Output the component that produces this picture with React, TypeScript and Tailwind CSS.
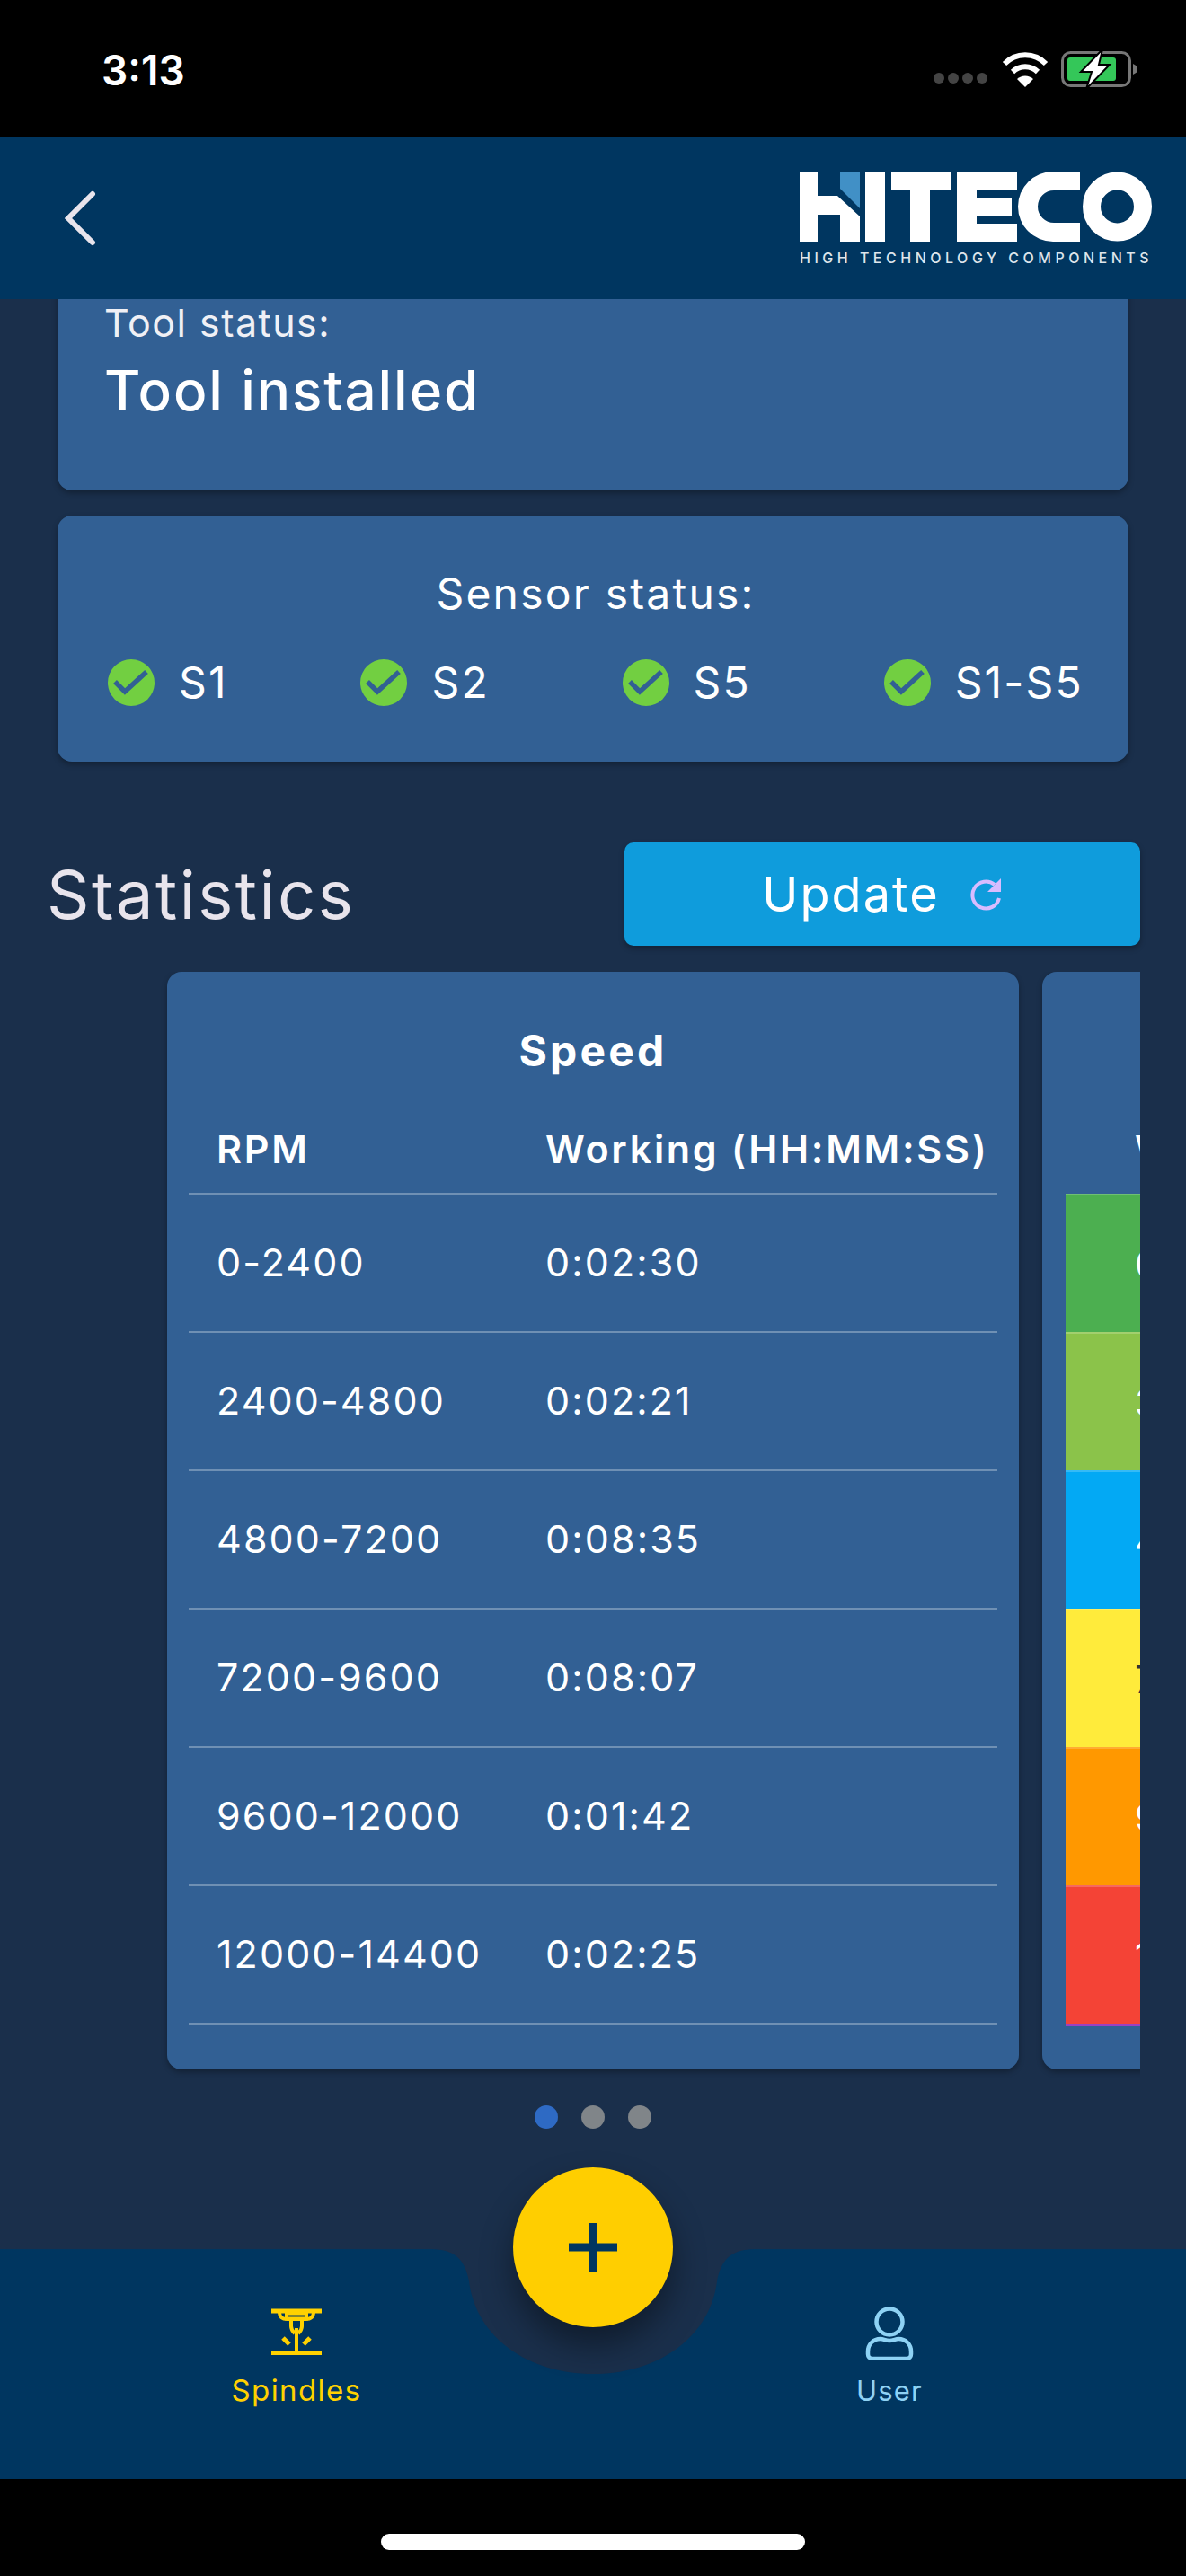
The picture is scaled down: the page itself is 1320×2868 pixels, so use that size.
const rows = [
  { range: "0-2400", time: "0:02:30", cell: "bg-[#4caf50] text-white", count: "0" },
  { range: "2400-4800", time: "0:02:21", cell: "bg-[#8bc34a] text-white", count: "3" },
  { range: "4800-7200", time: "0:08:35", cell: "bg-[#03a9f4] text-white", count: "4" },
  { range: "7200-9600", time: "0:08:07", cell: "bg-[#ffeb3b] text-[#333333]", count: "7" },
  { range: "9600-12000", time: "0:01:42", cell: "bg-[#ff9800] text-white", count: "9" },
  { range: "12000-14400", time: "0:02:25", cell: "bg-[#f44336] text-white", count: "1" },
];

function Check() {
  return (
    <svg width="52" height="52" viewBox="0 0 52 52" className="shrink-0">
      <circle cx="26" cy="26" r="26" fill="#72cf41" />
      <path d="M8 25l11 11 24-22" fill="none" stroke="#326094" strokeWidth="5.5" />
    </svg>
  );
}

function Sensor({ label }: { label: string }) {
  return (
    <div className="flex items-center gap-[27px]">
      <Check />
      <span className="text-[48px] leading-none tracking-[2.2px] text-white">{label}</span>
    </div>
  );
}

function Logo() {
  return (
    <div className="flex w-[392px] flex-col">
      <svg width="392" height="78" viewBox="0 0 392 78">
        <path d="M0 0h20v27h22l25 23v28H45V48H20v30H0z" fill="#fff" />
        <path d="M45 0h22v41L45 19z" fill="#4190c6" />
        <path d="M73 0h22v78H73z" fill="#fff" />
        <path d="M102 0h66v21h-23v57h-22V21h-21z" fill="#fff" />
        <path d="M175 0h67v21h-45v8h39v20h-39v9h45v20h-67z" fill="#fff" />
        <path d="M312 0H282a39 39 0 0 0 0 78h30V57H283a18 18 0 0 1 0-36h29z" fill="#fff" />
        <circle cx="353.5" cy="39" r="28.5" fill="none" stroke="#fff" strokeWidth="20" />
      </svg>
      <span className="mt-[9px] whitespace-nowrap font-['Inter'] text-[16px] font-medium leading-[18px] tracking-[4.5px] text-[#dfe6ec]">
        HIGH TECHNOLOGY COMPONENTS
      </span>
    </div>
  );
}

function StatusBar() {
  return (
    <div className="flex h-[153px] shrink-0 items-center justify-between bg-black pl-[113px] pr-[53px]">
      <span className="pt-[3px] font-['Inter'] text-[46px] font-semibold leading-none text-white">3:13</span>
      <div className="flex items-center">
        <div className="mt-[20px] mr-[16px] flex gap-[4px]">
          <span className="h-[12px] w-[12px] rounded-full bg-[#444]" />
          <span className="h-[12px] w-[12px] rounded-full bg-[#444]" />
          <span className="h-[12px] w-[12px] rounded-full bg-[#444]" />
          <span className="h-[12px] w-[12px] rounded-full bg-[#444]" />
        </div>
        <svg width="52" height="40" viewBox="0 0 52 40" className="mr-[14px]">
          <path d="M3 14a32 32 0 0 1 46 0" fill="none" stroke="#fff" strokeWidth="6" />
          <path d="M12 23a20 20 0 0 1 28 0" fill="none" stroke="#fff" strokeWidth="6" />
          <path d="M17 31a13 13 0 0 1 18 0l-9 9z" fill="#fff" />
        </svg>
        <svg width="86" height="44" viewBox="0 0 86 44">
          <rect x="1.5" y="3.5" width="75" height="37" rx="9" fill="none" stroke="#777" strokeWidth="3" />
          <rect x="7" y="9" width="54" height="26" rx="3" fill="#34c759" />
          <path d="M80 16l5 3v6l-5 3z" fill="#777" />
          <path d="M46 0L22 25h12l-6 19 26-27H42z" fill="#fff" stroke="#000" strokeWidth="2" />
        </svg>
      </div>
    </div>
  );
}

function Nav() {
  return (
    <div className="relative h-[256px] shrink-0 bg-[#003660]">
      <svg width="1320" height="256" viewBox="0 0 1320 256" className="absolute left-0 top-0">
        <path d="M480 0c28 0 38 14 42 36C530 100 590 139 660 139S790 100 798 36c4-22 14-36 42-36z" fill="#1a2f4b" />
      </svg>
      <div className="relative flex h-full">
        <div className="flex w-[660px] flex-col items-center pt-[66px]">
          <svg width="56" height="52" viewBox="0 0 56 52" fill="none" stroke="#ffd100" strokeWidth="4">
            <path d="M0 3h56" strokeWidth="5" />
            <path d="M9 4c0 7 4 8 9 8h20c5 0 9-1 9-8" />
            <path d="M17 5.5h22v6H17z" />
            <path d="M22 12v8c0 4 2 6 4 8 M34 12v8c0 4-2 6-4 8 M28 22v27" />
            <path d="M13 33l7 7 M43 33l-7 7" strokeWidth="5" />
            <path d="M0 50h56" strokeWidth="4" />
          </svg>
          <span className="mt-[19px] text-[33px] leading-[41px] tracking-[1.4px] text-[#ffd100]">Spindles</span>
        </div>
        <div className="flex w-[660px] flex-col items-center pt-[64px]">
          <svg width="54" height="60" viewBox="0 0 54 60" fill="none" stroke="#8ed2f4" strokeWidth="4.5">
            <circle cx="27" cy="17" r="14.5" />
            <path d="M17 36c-8 0-14 6-14 14v3c0 3 2 5 5 5h38c3 0 5-2 5-5v-3c0-8-6-14-14-14-3 0-6 2-10 2s-7-2-10-2z" />
          </svg>
          <span className="mt-[13px] text-[31px] leading-[41px] tracking-[1.2px] text-[#8ed2f4]">User</span>
        </div>
      </div>
      <div className="absolute left-[571px] top-[-91px] flex h-[178px] w-[178px] items-center justify-center rounded-full bg-[#ffce00] shadow-[0_20px_36px_rgba(0,0,0,0.4)]">
        <svg width="54" height="54" viewBox="0 0 54 54">
          <path d="M27 0v54M0 27h54" stroke="#003660" strokeWidth="9" />
        </svg>
      </div>
    </div>
  );
}

export default function App() {
  return (
    <div className="flex h-[2868px] w-[1320px] flex-col overflow-hidden bg-[#1a2f4b] font-['Inter',sans-serif]">
      <StatusBar />
      <header className="relative z-10 flex h-[180px] shrink-0 items-center justify-between bg-[#003660] pl-[70px] pr-[38px]">
        <svg width="38" height="62" viewBox="0 0 38 62" fill="none" stroke="#e8e4ec" strokeWidth="6" strokeLinecap="round">
          <path d="M33 4L6 31l27 27" />
        </svg>
        <Logo />
      </header>

      <main className="flex min-h-0 flex-1 flex-col overflow-hidden">
        <section className="mx-[64px] mt-[-40px] h-[253px] shrink-0 rounded-[16px] bg-[#326094] pl-[52px] pt-[40px] shadow-[0_3px_6px_rgba(0,0,0,0.3)]">
          <p className="text-[43px] leading-[52px] tracking-[1.5px] text-[#f0f0f5]">Tool status:</p>
          <p className="mt-[12px] text-[62px] font-medium leading-[75px] tracking-[1.9px] text-white">Tool installed</p>
        </section>

        <section className="mx-[64px] mt-[28px] h-[274px] shrink-0 rounded-[16px] bg-[#326094] pl-[56px] pr-[50px] pt-[60px] shadow-[0_3px_6px_rgba(0,0,0,0.3)]">
          <p className="text-center text-[48px] leading-[54px] tracking-[2.2px] text-white">Sensor status:</p>
          <div className="mt-[46px] flex justify-between">
            <Sensor label="S1" />
            <Sensor label="S2" />
            <Sensor label="S5" />
            <Sensor label="S1-S5" />
          </div>
        </section>

        <div className="mt-[90px] flex items-center justify-between pl-[52px] pr-[51px]">
          <h2 className="text-[74px] font-normal leading-[90px] tracking-[2.5px] text-[#e8e4ec]">Statistics</h2>
          <button className="flex h-[115px] w-[574px] items-center justify-center gap-[34px] rounded-[10px] bg-[#0f9cdc] shadow-[0_3px_6px_rgba(0,0,0,0.3)]">
            <span className="text-[54px] leading-none tracking-[2px] text-white">Update</span>
            <svg width="36" height="36" viewBox="0 0 36 36" fill="none" stroke="#d8bcff" strokeWidth="4">
              <path d="M32 22A15 15 0 1 1 27 7" />
              <path d="M34 0v15H19z" fill="#d8bcff" stroke="none" />
            </svg>
          </button>
        </div>

        <div className="mr-[51px] mt-[29px] flex overflow-hidden pb-[10px] pl-[186px]">
          <div className="flex gap-[26px]">
            <div className="h-[1222px] w-[948px] shrink-0 rounded-[16px] bg-[#326094] px-[24px] shadow-[0_3px_6px_rgba(0,0,0,0.3)]">
              <h3 className="pt-[60px] text-center text-[48px] font-bold leading-[56px] tracking-[3.2px] text-white">Speed</h3>
              <div className="mt-[56px] flex h-[76px] border-b-2 border-white/30 text-[43px] font-semibold leading-[50px] tracking-[2.7px] text-white">
                <span className="w-[397px] pl-[31px]">RPM</span>
                <span className="whitespace-nowrap">Working (HH:MM:SS)</span>
              </div>
              {rows.map((r) => (
                <div key={r.range} className="flex h-[154px] items-center border-b-2 border-white/30 pb-[2px] text-[43px] leading-[50px] tracking-[2.1px] text-white">
                  <span className="w-[397px] pl-[31px]">{r.range}</span>
                  <span>{r.time}</span>
                </div>
              ))}
            </div>
            <div className="h-[1222px] w-[948px] shrink-0 rounded-[16px] bg-[#326094] pl-[26px] shadow-[0_3px_6px_rgba(0,0,0,0.3)]">
              <div className="h-[247px] pl-[77px] pt-[172px] text-[43px] font-semibold leading-[50px] text-white">W</div>
              {rows.map((r) => (
                <div key={r.range} className={`flex h-[154px] items-center border-t-2 border-white/20 pl-[77px] text-[43px] leading-[50px] ${r.cell}`}>
                  {r.count}
                </div>
              ))}
              <div className="h-[3px] bg-[#9c40c0]" />
            </div>
          </div>
        </div>

        <div className="mt-[30px] flex justify-center gap-[26px]">
          <span className="h-[26px] w-[26px] rounded-full bg-[#2e6ac4]" />
          <span className="h-[26px] w-[26px] rounded-full bg-[#808589]" />
          <span className="h-[26px] w-[26px] rounded-full bg-[#808589]" />
        </div>
      </main>

      <Nav />

      <div className="flex h-[108px] shrink-0 justify-center bg-black pt-[61px]">
        <div className="h-[18px] w-[472px] rounded-full bg-white" />
      </div>
    </div>
  );
}
